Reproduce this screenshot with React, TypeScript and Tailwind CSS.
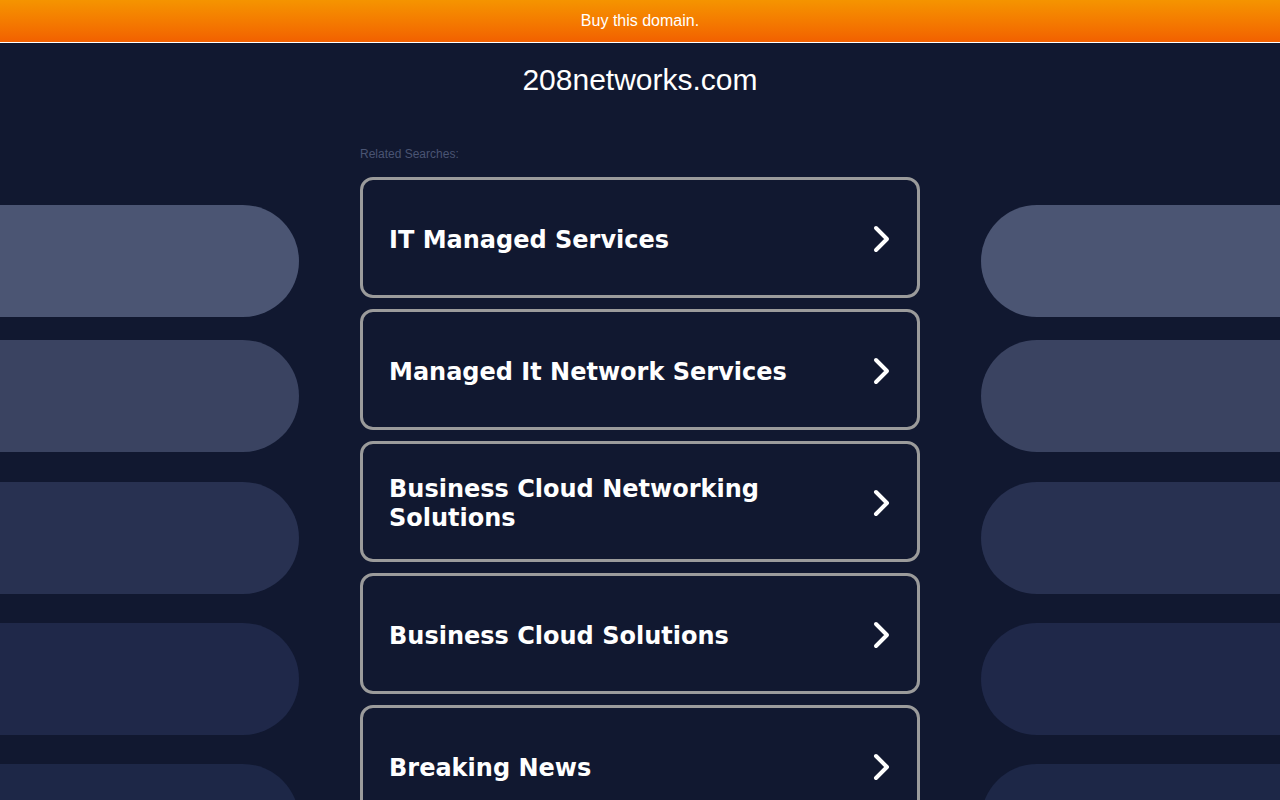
const searches = [
  "IT Managed Services",
  "Managed It Network Services",
  "Business Cloud Networking Solutions",
  "Business Cloud Solutions",
  "Breaking News",
];

// decorative side pills: top margin + colour
const pills = [
  { mt: "mt-[162px]", bg: "bg-[#4b5573]" },
  { mt: "mt-[23px]", bg: "bg-[#3a4361]" },
  { mt: "mt-[30px]", bg: "bg-[#283151]" },
  { mt: "mt-[29px]", bg: "bg-[#1f2849]" },
  { mt: "mt-[29px]", bg: "bg-[#1d2747]" },
];

function Chevron() {
  return (
    <svg width="20" height="28" viewBox="0 0 20 28" className="shrink-0 mt-[2px]">
      <polyline
        points="4,3 15,14 4,25"
        fill="none"
        stroke="white"
        strokeWidth="4"
        strokeLinecap="round"
        strokeLinejoin="round"
      />
    </svg>
  );
}

function SidePills({ side }: { side: "left" | "right" }) {
  return (
    <div className="flex flex-col w-[299px] shrink-0">
      {pills.map((p, i) => (
        <div
          key={i}
          className={`${p.mt} ${p.bg} h-[112px] shrink-0 ${
            side === "left" ? "rounded-r-[56px]" : "rounded-l-[56px]"
          }`}
        />
      ))}
    </div>
  );
}

export default function App() {
  return (
    <div className="h-[800px] overflow-hidden bg-[#111830] font-['Liberation_Sans',Arial,sans-serif]">
      <div className="h-[42px] bg-gradient-to-b from-[#f59400] to-[#f26000] flex items-center justify-center border-b border-white box-content">
        <span className="text-white text-[16px]">Buy this domain.</span>
      </div>
      <div className="relative">
        <div className="absolute inset-x-0 top-0 flex justify-between">
          <SidePills side="left" />
          <SidePills side="right" />
        </div>
        <div className="relative flex flex-col items-center">
          <h1 className="text-white text-[30px] mt-[19px] leading-[36px]">208networks.com</h1>
          <div className="w-[560px] mt-[49px]">
            <div className="text-[12px] text-[#4a5473] leading-[14px]">Related Searches:</div>
            <div className="mt-[16px] flex flex-col gap-[11px]">
              {searches.map((s) => (
                <div
                  key={s}
                  className="h-[121px] shrink-0 border-[3px] border-[#9b9b9b] rounded-[13px] flex items-center justify-between pl-[26px] pr-[25px] bg-[#111830]"
                >
                  <span className="text-white font-bold text-[24px] leading-[29px] pt-[5px] font-['DejaVu_Sans',Verdana,sans-serif] max-w-[420px]">
                    {s}
                  </span>
                  <Chevron />
                </div>
              ))}
            </div>
          </div>
        </div>
      </div>
    </div>
  );
}
